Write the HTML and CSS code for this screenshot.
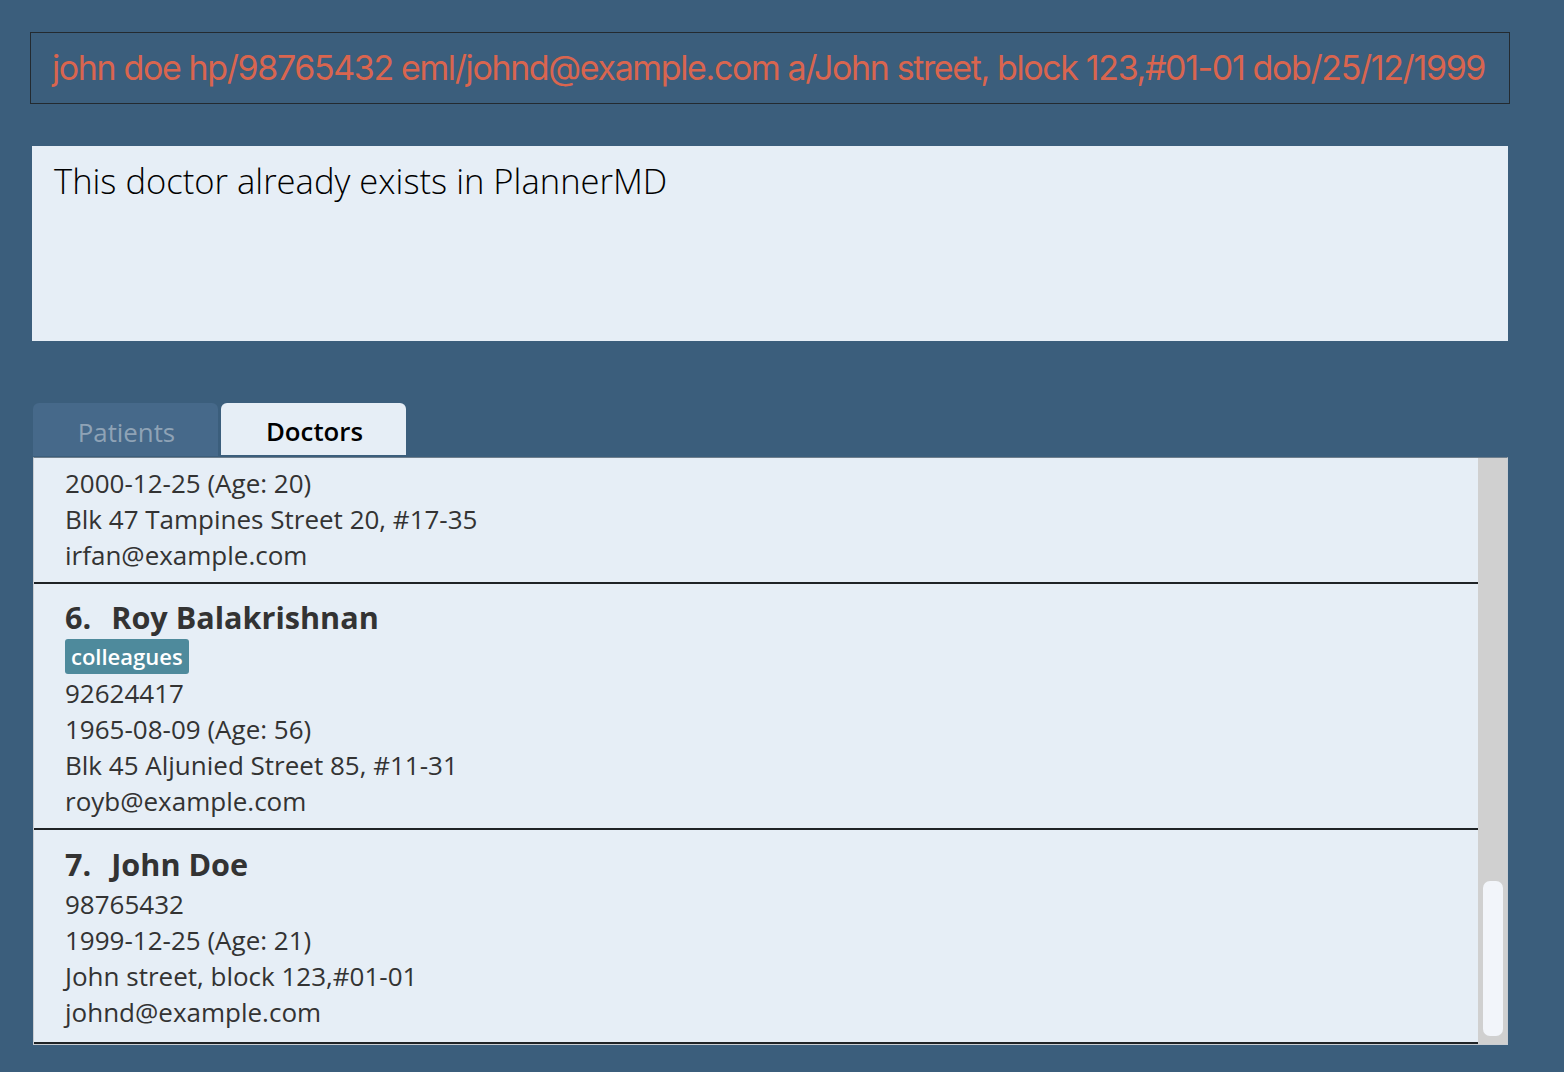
FILE: index.html
```html
<!DOCTYPE html>
<html lang="en">
<head>
<meta charset="utf-8">
<title>PlannerMD</title>
<link rel="stylesheet" href="styles.css">
</head>
<body>
<div class="app">
  <div class="command-box">
    <span class="command-text">john doe hp/98765432 eml/johnd@example.com a/John street, block 123,#01-01 dob/25/12/1999</span>
  </div>
  <div class="result-box">This doctor already exists in PlannerMD</div>
  <div class="tabs">
    <div class="tab-bar">
      <div class="tab">Patients</div>
      <div class="tab tab-active">Doctors</div>
    </div>
    <div class="list-panel">
      <div class="list-scroll">
        <div class="list">
          <div class="card">
            <div class="card-title"><span class="idx">1.</span>Alex Yeoh</div>
            <div class="tags"><span class="tag">friends</span></div>
            <div class="line">87438807</div>
            <div class="line">1990-03-14 (Age: 31)</div>
            <div class="line">Blk 30 Geylang Street 29, #06-40</div>
            <div class="line">alexyeoh@example.com</div>
          </div>
          <div class="card">
            <div class="card-title"><span class="idx">2.</span>Bernice Yu</div>
            <div class="tags"><span class="tag">colleagues</span><span class="tag">friends</span></div>
            <div class="line">99272758</div>
            <div class="line">1985-07-21 (Age: 36)</div>
            <div class="line">Blk 30 Lorong 3 Serangoon Gardens, #07-18</div>
            <div class="line">berniceyu@example.com</div>
          </div>
          <div class="card">
            <div class="card-title"><span class="idx">3.</span>Charlotte Oliveiro</div>
            <div class="tags"><span class="tag">neighbours</span></div>
            <div class="line">93210283</div>
            <div class="line">1978-11-02 (Age: 42)</div>
            <div class="line">Blk 11 Ang Mo Kio Street 74, #11-04</div>
            <div class="line">charlotte@example.com</div>
          </div>
          <div class="card">
            <div class="card-title"><span class="idx">4.</span>David Li</div>
            <div class="tags"><span class="tag">family</span></div>
            <div class="line">91031282</div>
            <div class="line">1995-05-30 (Age: 26)</div>
            <div class="line">Blk 436 Serangoon Gardens Street 26, #16-43</div>
            <div class="line">lidavid@example.com</div>
          </div>
          <div class="card">
            <div class="card-title"><span class="idx">5.</span>Irfan Ibrahim</div>
            <div class="tags"><span class="tag">classmates</span></div>
            <div class="line">92492021</div>
            <div class="line">2000-12-25 (Age: 20)</div>
            <div class="line">Blk 47 Tampines Street 20, #17-35</div>
            <div class="line">irfan@example.com</div>
          </div>
          <div class="card">
            <div class="card-title"><span class="idx">6.</span>Roy Balakrishnan</div>
            <div class="tags"><span class="tag">colleagues</span></div>
            <div class="line">92624417</div>
            <div class="line">1965-08-09 (Age: 56)</div>
            <div class="line">Blk 45 Aljunied Street 85, #11-31</div>
            <div class="line">royb@example.com</div>
          </div>
          <div class="card card-last">
            <div class="card-title"><span class="idx">7.</span>John Doe</div>
            <div class="line">98765432</div>
            <div class="line">1999-12-25 (Age: 21)</div>
            <div class="line">John street, block 123,#01-01</div>
            <div class="line">johnd@example.com</div>
          </div>
        </div>
      </div>
      <div class="scrollbar">
        <div class="scroll-thumb"></div>
      </div>
    </div>
  </div>
</div>
</body>
</html>
```
FILE: styles.css
```css
html, body {
  margin: 0;
  padding: 0;
  background: #3b5e7c;
  height: 100%;
  overflow: hidden;
}

.app {
  display: flex;
  flex-direction: column;
  padding: 32px 0 0 30px;
  width: 1480px;
}

.command-box {
  height: 70px;
  border: 1px solid #232a30;
  display: flex;
  align-items: center;
  padding-left: 21px;
  overflow: hidden;
  white-space: nowrap;
}

.command-text {
  font-family: Inter, "Liberation Sans", sans-serif;
  font-size: 34px;
  letter-spacing: -1.38px;
  color: #d9654f;
  margin-top: -1px;
}

.result-box {
  margin: 42px 2px 0 2px;
  height: 183px;
  background: #e6eef6;
  padding: 12px 22px 0 22px;
  font-family: "Open Sans", sans-serif;
  font-weight: 300;
  font-size: 34.6px;
  line-height: 46px;
  color: #000;
}

.tabs {
  margin-top: 62px;
  display: flex;
  flex-direction: column;
}

.tab-bar {
  display: flex;
  gap: 3px;
  padding-left: 3px;
  height: 54px;
}

.tab {
  width: 185px;
  height: 53px;
  border-radius: 6px 6px 0 0;
  background: #46698a;
  color: #8fa3b6;
  font-family: "Open Sans", sans-serif;
  font-size: 25.8px;
  display: flex;
  align-items: center;
  justify-content: center;
  padding: 4px 0 0 2px;
  box-sizing: border-box;
}

.tab-active {
  background: #e6eef6;
  color: #000;
  font-weight: 600;
  height: 52px;
}

.list-panel {
  margin-left: 3px;
  margin-right: 2px;
  height: 588px;
  border: 1px solid #c9cdd2;
  border-top-color: #6f7f8d;
  background: #e6eef6;
  display: flex;
  box-sizing: border-box;
}

.list-scroll {
  flex: 1;
  overflow: hidden;
  display: flex;
  flex-direction: column-reverse;
}

.list {
  display: flex;
  flex-direction: column;
}

.scrollbar {
  width: 29px;
  background: #d0d0d0;
  display: flex;
  flex-direction: column;
  justify-content: flex-end;
  align-items: center;
  padding-bottom: 8px;
  box-sizing: border-box;
}

.scroll-thumb {
  width: 20px;
  height: 155px;
  border-radius: 7px;
  background: #f2f5fa;
}

.card {
  padding: 13px 0 9px 31px;
  border-bottom: 2px solid #1f2326;
  font-family: "Open Sans", sans-serif;
  color: #333;
  font-size: 26px;
}

.card-last {
  padding-top: 14px;
  padding-bottom: 12px;
}

.card-title {
  font-size: 30.6px;
  font-weight: 700;
  line-height: 40px;
  margin-bottom: 2px;
}

.idx {
  margin-right: 20px;
}

.tags {
  display: flex;
  gap: 6px;
  height: 36px;
  align-items: flex-start;
}

.tag {
  background: #4e8a9c;
  color: #fff;
  font-size: 22px;
  font-weight: 600;
  line-height: 35px;
  height: 35px;
  padding: 0 6px;
  border-radius: 3px;
}

.line {
  line-height: 36px;
  height: 36px;
}
```
